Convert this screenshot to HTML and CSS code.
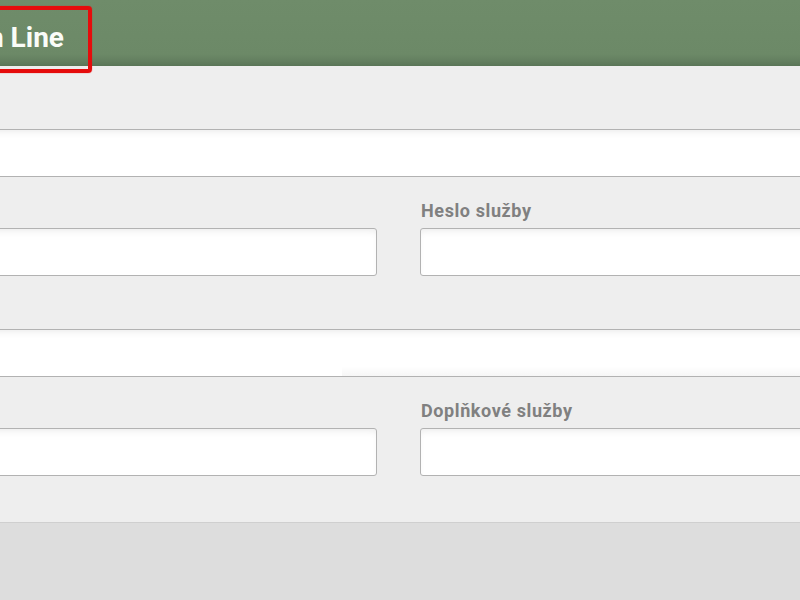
FILE: index.html
```html
<!DOCTYPE html>
<html lang="cs">
<head>
    <meta charset="UTF-8">
    <meta name="viewport" content="width=device-width, initial-scale=1.0">
    <title>Nastavení služby</title>
    <link rel="stylesheet" href="styles.css">
</head>
<body>
<div class="page">
    <header class="topbar">
        <div class="topbar-inner">
            <h1 class="title">Objednávka On Line</h1>
        </div>
    </header>

    <main class="panel">
        <form class="form">
            <div class="field field-wide">
                <label for="service-name">Název služby</label>
                <input type="text" id="service-name" />
            </div>

            <div class="row">
                <div class="field">
                    <label for="service-login">Přihlašovací jméno</label>
                    <input type="text" id="service-login" />
                </div>
                <div class="field">
                    <label for="service-pass">Heslo služby</label>
                    <input type="password" id="service-pass" />
                </div>
            </div>

            <div class="field field-wide">
                <label for="service-address">Adresa služby</label>
                <div class="input-wrap">
                    <input type="text" id="service-address" />
                </div>
            </div>

            <div class="row">
                <div class="field">
                    <label for="service-type">Typ služby</label>
                    <input type="text" id="service-type" />
                </div>
                <div class="field">
                    <label for="service-extra">Doplňkové služby</label>
                    <input type="text" id="service-extra" />
                </div>
            </div>
        </form>
    </main>
</div>
</body>
</html>
```

FILE: styles.css
```css
html, body {
    margin: 0;
    padding: 0;
}

body {
    font-family: Roboto, "DejaVu Sans", sans-serif;
    background-color: #dddddd;
    overflow: hidden;
}

/* the page is wider than the window and scrolled to its middle */
.page {
    width: 1300px;
    margin-left: -420px;
}

.topbar {
    box-sizing: border-box;
    height: 66px;
    padding-top: 24px;
    background: linear-gradient(to bottom, #6f8c6a 0%, #6c8967 82%, #5d785a 100%);
}

.topbar-inner {
    width: 484px;
    display: flex;
    justify-content: flex-end;
}

.title {
    position: relative;
    margin: 0;
    color: #fafcf8;
    font-size: 28px;
    font-weight: 700;
    line-height: 1;
    white-space: nowrap;
}

/* red frame drawn around the heading */
.title::after {
    content: "";
    position: absolute;
    top: -18px;
    bottom: -21px;
    left: -20px;
    right: -28px;
    border: 4px solid #e50c0c;
    border-radius: 4px;
    box-shadow: 0 0 1px #e50c0c;
    pointer-events: none;
}

.panel {
    background-color: #eeeeee;
    padding: 36px 0 20px;
    border-bottom: 1px solid #cfcfcf;
    box-shadow: 0 3px 7px rgba(0, 0, 0, 0.14);
}

.form {
    width: 1477px;
    margin-left: 80px;
}

.row {
    display: grid;
    grid-template-columns: 1fr 1fr;
    column-gap: 43px;
}

.field {
    display: flex;
    flex-direction: column;
    margin-bottom: 26px;
}

.field-wide {
    margin-bottom: 24px;
}

.field label {
    font-size: 18px;
    font-weight: 700;
    line-height: 20px;
    letter-spacing: 0.6px;
    color: #808080;
    margin-bottom: 7px;
    padding-left: 1px;
}

.field input {
    box-sizing: border-box;
    display: block;
    height: 48px;
    width: 100%;
    margin: 0;
    border: 1px solid #b2b2b2;
    border-radius: 3px;
    background-color: #ffffff;
    box-shadow: inset 0 5px 7px -3px rgba(0, 0, 0, 0.08);
    font: inherit;
}

.field-wide input {
    border-left: 0;
    border-right: 0;
    border-radius: 0;
}

/* faint shade along the lower edge of the right part of the address box */
.input-wrap {
    position: relative;
}

.input-wrap::after {
    content: "";
    position: absolute;
    left: 682px;
    right: 0;
    bottom: 1px;
    height: 10px;
    background: linear-gradient(to bottom, rgba(0, 0, 0, 0), rgba(0, 0, 0, 0.035));
    pointer-events: none;
}
```
